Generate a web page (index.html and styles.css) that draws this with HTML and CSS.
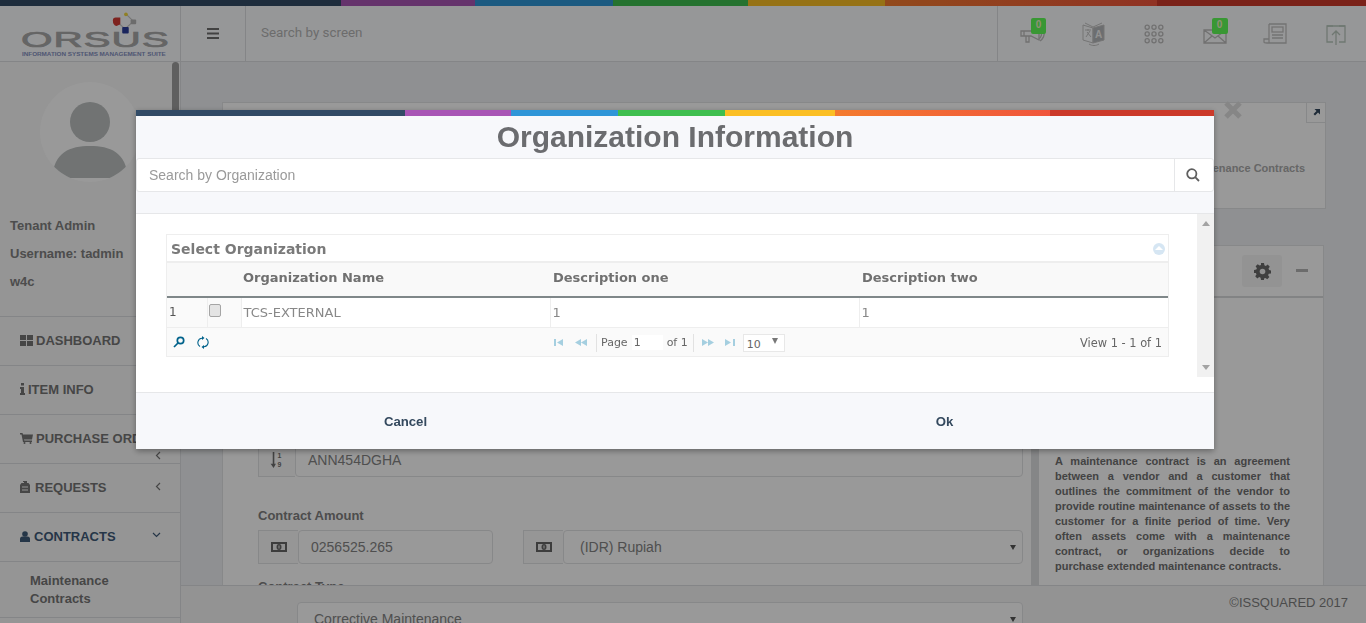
FILE: index.html
```html
<!DOCTYPE html>
<html lang="en">
<head>
    <meta charset="UTF-8">
    <title>Orsus - Maintenance Contracts</title>
    <link rel="stylesheet" href="styles.css">
</head>
<body>
    <div class="color-strip page-strip">
        <span class="c-navy"></span><span class="c-purple"></span><span class="c-blue"></span><span class="c-green"></span><span class="c-yellow"></span><span class="c-orange"></span><span class="c-red"></span>
    </div>

    <header class="topbar">
        <div class="logo">
            <svg class="logo-mark" viewBox="0 0 30 30">
                <path d="M6 10 L15 18 M15 18 L24 10 M24 10 L16 2" stroke="#c4c4c4" stroke-width="1.200" fill="none"/>
                <path d="M2 9 Q2 6 5 6 L10 6 L10 13 L6 15 Q2 14 2 9Z" fill="#d23b35"/>
                <rect x="12" y="16" width="7" height="7" rx="1" fill="#2c3f9c"/>
                <rect x="21" y="8" width="6" height="5" rx="1" fill="#b4b4b4"/>
                <circle cx="16" cy="2.500" r="2" fill="#f1d63c"/>
            </svg>
            <div class="logo-word">ORSUS</div>
            <div class="logo-sub">INFORMATION SYSTEMS MANAGEMENT SUITE</div>
        </div>
        <div class="menu-toggle">
            <svg width="12" height="11" viewBox="0 0 12 11"><path d="M0 0h12v2H0zM0 4.500h12v2H0zM0 9h12v2H0z" fill="#6f6f6f"/></svg>
        </div>
        <div class="screen-search">Search by screen</div>
        <div class="top-icons">
            <div class="top-icon">
                <svg width="26" height="22" viewBox="0 0 26 22" fill="none" stroke="#bcbcbc" stroke-width="1.300"><path d="M1 8h3v5H1zM4 8h7l8-4v13l-8-4H4zM6 13v6h3v-6"/><path d="M21 9c1 2 0 5-2 7M24 9c1 3-1 7-4 9"/></svg>
                <span class="badge">0</span>
            </div>
            <div class="top-icon">
                <svg width="24" height="26" viewBox="0 0 24 26" fill="none" stroke="#c2c2c2" stroke-width="1"><path d="M1 4l10 3v15L1 19z"/><path d="M11 7l11-3v15l-11 3z" fill="#b5b7bb"/><path d="M3 9h6M6 8v2M8 10l-4 6M5 11l4 5"/><path d="M7 23c3 2 7 2 10 0"/><path d="M3 2l8 4M20 2l-9 4"/><text x="13" y="17" font-family="Liberation Sans" font-size="10" font-weight="700" fill="#f2f2f2" stroke="none">A</text></svg>
            </div>
            <div class="top-icon">
                <svg width="20" height="20" viewBox="0 0 22 22" fill="none" stroke="#bcbcbc" stroke-width="1.400"><circle cx="3.500" cy="3.500" r="2.300"/><circle cx="11" cy="3.500" r="2.300"/><circle cx="18.500" cy="3.500" r="2.300"/><circle cx="3.500" cy="11" r="2.300"/><circle cx="11" cy="11" r="2.300"/><circle cx="18.500" cy="11" r="2.300"/><circle cx="3.500" cy="18.500" r="2.300"/><circle cx="11" cy="18.500" r="2.300"/><circle cx="18.500" cy="18.500" r="2.300"/></svg>
            </div>
            <div class="top-icon">
                <svg width="24" height="20" viewBox="0 0 24 20" fill="none" stroke="#bcbcbc" stroke-width="1.300"><path d="M1 6h22v13H1zM1 6l11 8 11-8M1 19l8-7M23 19l-8-7"/></svg>
                <span class="badge badge-mail">0</span>
            </div>
            <div class="top-icon">
                <svg width="24" height="24" viewBox="0 0 24 24" fill="none" stroke="#c0c0c0" stroke-width="1.300"><path d="M6 2h17v19H4M6 2v15H1v3q0 1 3 1t2-1v-3"/><rect x="9" y="5" width="11" height="5"/><path d="M9 13h11M9 16h11"/></svg>
            </div>
            <div class="top-icon">
                <svg width="20" height="22" viewBox="0 0 20 22" fill="none" stroke="#b9c7bd" stroke-width="1.300"><path d="M7 3H1v16h6M13 3h6v16h-6"/><path d="M1 3h18M10 22V8M6 12l4-4 4 4"/></svg>
            </div>
        </div>
    </header>

    <div class="layout">
        <aside class="sidebar">
            <div class="scroll-thumb"></div>
            <div class="avatar">
                <svg width="100" height="100" viewBox="0 0 100 100"><circle cx="50" cy="40" r="20" fill="#bcc0c0"/><path d="M12 96c2-26 18-32 38-32s36 6 38 32z" fill="#bcc0c0"/></svg>
            </div>
            <div class="user-info">
                <p>Tenant Admin</p>
                <p>Username: tadmin</p>
                <p>w4c</p>
            </div>
            <nav class="side-menu">
                <a class="menu-item">
                    <svg width="13" height="11" viewBox="0 0 13 11"><path d="M0 0h6v5H0zM7 0h6v5H7zM0 6h6v5H0zM7 6h6v5H7z" fill="#757575"/></svg>DASHBOARD
                </a>
                <a class="menu-item">
                    <svg width="5" height="12" viewBox="0 0 5 12"><path d="M1 0h3v2.500H1zM0 4h4v6h1v2H0v-2h1V6H0z" fill="#757575"/></svg>ITEM INFO
                </a>
                <a class="menu-item">
                    <svg width="13" height="11" viewBox="0 0 13 11"><path d="M0 0h2.500l.5 1.500h10L12 6.500H4l.3 1H12V9H3L1.500 1.500H0z" fill="#757575"/><circle cx="4.500" cy="10" r="1" fill="#757575"/><circle cx="10.500" cy="10" r="1" fill="#757575"/></svg>PURCHASE ORDERS
                    <svg class="chev chev-low" width="6" height="9" viewBox="0 0 6 9"><path d="M5 1L1.500 4.500 5 8" fill="none" stroke="#757575" stroke-width="1.200"/></svg>
                </a>
                <a class="menu-item">
                    <svg class="icon-req" width="10" height="12" viewBox="0 0 10 12"><path d="M3 0h4v2h1.500l1.500 2v8H0V4l1.500-2H3z" fill="#757575"/><path d="M2 6h6M3.500 2v-1" stroke="#f8f8f8"/><path d="M2 9h6" stroke="#f8f8f8"/></svg>REQUESTS
                    <svg class="chev" width="6" height="9" viewBox="0 0 6 9"><path d="M5 1L1.500 4.500 5 8" fill="none" stroke="#757575" stroke-width="1.200"/></svg>
                </a>
                <a class="menu-item menu-active">
                    <svg class="icon-user" width="10" height="11" viewBox="0 0 10 11"><circle cx="5" cy="3" r="2.800" fill="#3f5a78"/><path d="M0 11V8q0-2.500 2.500-2.500h5Q10 5.500 10 8v3z" fill="#3f5a78"/></svg>CONTRACTS
                    <svg class="chev chev-down" width="9" height="6" viewBox="0 0 9 6"><path d="M1 1l3.500 3.500L8 1" fill="none" stroke="#3f5a78" stroke-width="1.200"/></svg>
                </a>
                <a class="submenu-item">Maintenance Contracts</a>
            </nav>
        </aside>

        <main class="content">
            <section class="card top-card">
                <span class="expand-box">
                    <svg width="7" height="7" viewBox="0 0 7 7"><path d="M1.500 0H7v5.500L5 3.500 2 6.500.5 5 3.500 2z" fill="#34495e"/></svg>
                </span>
                <div class="top-card-title">Maintenance Contracts</div>
            </section>
            <svg class="close-x" width="18" height="18" viewBox="0 0 18 18"><path d="M2 2l14 14M16 2L2 16" stroke="#e0e0e0" stroke-width="5"/></svg>

            <section class="card form-card">
                <div class="card-head">
                    <span class="gear-btn">
                        <svg width="17" height="17" viewBox="0 0 17 17"><path d="M7 0h3l.4 2.300 1.400.6 1.900-1.300 2.100 2.100-1.300 1.900.6 1.400L17 7.400v3l-2.300.4-.6 1.400 1.300 1.900-2.100 2.100-1.900-1.300-1.400.6L10 17H7l-.4-2.300-1.400-.6-1.900 1.300-2.100-2.100 1.300-1.900-.6-1.400L0 10V7l2.300-.4.600-1.400L1.600 3.300 3.700 1.200l1.900 1.300 1.400-.6z" fill="#6a6a6a"/><circle cx="8.500" cy="8.500" r="2.800" fill="#eee"/></svg>
                    </span>
                    <span class="minus"></span>
                </div>
                <div class="card-body">
                    <div class="form-side">
                        <div class="field-row">
                            <span class="addon addon-sm"><svg width="14" height="16" viewBox="0 0 12 15"><path d="M2 0h1.500v11H5l-2.200 4L0 11h2z" fill="#6f6f6f"/><text x="6.500" y="6" font-family="Liberation Sans" font-size="6.500" font-weight="700" fill="#6f6f6f">1</text><text x="6.500" y="14" font-family="Liberation Sans" font-size="6.500" font-weight="700" fill="#6f6f6f">9</text></svg></span>
                            <span class="input input-wide">ANN454DGHA</span>
                        </div>
                        <label class="field-label">Contract Amount</label>
                        <div class="field-row">
                            <span class="addon"><svg width="16" height="10" viewBox="0 0 16 10"><path d="M0 0h16v10H0z" fill="#666"/><rect x="2" y="2" width="12" height="6" fill="#eee"/><ellipse cx="8" cy="5" rx="2.500" ry="3" fill="#666"/><rect x="7.500" y="3.500" width="1" height="3" fill="#eee"/></svg></span>
                            <span class="input input-amount">0256525.265</span>
                            <span class="addon addon-gap"><svg width="16" height="10" viewBox="0 0 16 10"><path d="M0 0h16v10H0z" fill="#666"/><rect x="2" y="2" width="12" height="6" fill="#eee"/><ellipse cx="8" cy="5" rx="2.500" ry="3" fill="#666"/><rect x="7.500" y="3.500" width="1" height="3" fill="#eee"/></svg></span>
                            <span class="input input-select">(IDR) Rupiah<i class="caret"></i></span>
                        </div>
                        <label class="field-label label-type">Contract Type</label>
                        <div class="type-row">
                            <span class="input input-type">Corrective Maintenance<i class="caret"></i></span>
                        </div>
                    </div>
                    <div class="info-side">
                        <p>A maintenance contract is an agreement between a vendor and a customer that outlines the commitment of the vendor to provide routine maintenance of assets to the customer for a finite period of time. Very often assets come with a maintenance contract, or organizations decide to purchase extended maintenance contracts.</p>
                    </div>
                </div>
            </section>

            <footer class="page-footer">&copy;ISSQUARED 2017</footer>
        </main>
    </div>

    <div class="backdrop"></div>

    <div class="modal">
        <div class="color-strip modal-strip">
            <span class="c-navy"></span><span class="c-purple"></span><span class="c-blue"></span><span class="c-green"></span><span class="c-yellow"></span><span class="c-orange"></span><span class="c-red"></span>
        </div>
        <h2 class="modal-title">Organization Information</h2>
        <div class="org-search">
            <div class="org-search-input">Search by Organization</div>
            <div class="org-search-btn">
                <svg width="14" height="14" viewBox="0 0 14 14" fill="none" stroke="#5f5f5f" stroke-width="1.800"><circle cx="5.800" cy="5.800" r="4.600"/><path d="M9.200 9.200L13 13"/></svg>
            </div>
        </div>
        <div class="modal-body">
            <div class="grid-scroll">
                <div class="grid">
                    <div class="grid-caption">
                        Select Organization
                        <span class="collapse-btn"><i></i></span>
                    </div>
                    <table class="grid-table">
                        <colgroup>
                            <col class="col-num"><col class="col-check"><col class="col-name"><col class="col-desc"><col class="col-desc">
                        </colgroup>
                        <thead>
                            <tr><th></th><th></th><th>Organization Name</th><th class="th-desc">Description one</th><th class="th-desc">Description two</th></tr>
                        </thead>
                        <tbody>
                            <tr>
                                <td class="cell-num">1</td>
                                <td class="cell-check"><input type="checkbox"></td>
                                <td>TCS-EXTERNAL</td>
                                <td>1</td>
                                <td>1</td>
                            </tr>
                        </tbody>
                    </table>
                    <div class="grid-pager">
                        <div class="pager-left">
                            <svg width="12" height="12" viewBox="0 0 12 12" fill="none" stroke="#00628b" stroke-width="1.700"><circle cx="7.500" cy="4.500" r="3.200"/><path d="M5 7L1 11"/></svg>
                            <svg width="12" height="13" viewBox="0 0 12 13" fill="none" stroke="#00628b" stroke-width="1.100"><path d="M3 10.500A4.500 4.500 0 0 1 5 2.200M9 2.500a4.500 4.500 0 0 1-2 8.300"/><path d="M5 0v4L7.500 2zM7 13V9l-2.500 2z" fill="#00628b" stroke="none"/></svg>
                        </div>
                        <div class="pager-center">
                            <svg class="pg-btn" width="10" height="7" viewBox="0 0 10 7"><path d="M0 0h2v7H0zM9 0v7L3 3.500z" fill="#a5cfe0"/></svg>
                            <svg class="pg-btn" width="12" height="7" viewBox="0 0 12 7"><path d="M6 0v7L0 3.500zM12 0v7L6 3.500z" fill="#a5cfe0"/></svg>
                            <span class="pg-sep"></span>
                            <span>Page</span>
                            <span class="pg-input">1</span>
                            <span>of 1</span>
                            <span class="pg-sep pg-sep-right"></span>
                            <svg class="pg-btn" width="12" height="7" viewBox="0 0 12 7"><path d="M0 0v7l6-3.500zM6 0v7l6-3.500z" fill="#a5cfe0"/></svg>
                            <svg class="pg-btn" width="10" height="7" viewBox="0 0 10 7"><path d="M0 0v7l6-3.500zM8 0h2v7H8z" fill="#a5cfe0"/></svg>
                            <span class="pg-size">10<i></i></span>
                        </div>
                        <div class="pager-right">View 1 - 1 of 1</div>
                    </div>
                </div>
            </div>
            <div class="modal-scrollbar">
                <i class="arrow-up"></i>
                <i class="arrow-down"></i>
            </div>
        </div>
        <div class="modal-footer">
            <button class="modal-btn">Cancel</button>
            <button class="modal-btn">Ok</button>
        </div>
    </div>
</body>
</html>
```

FILE: styles.css
```css
* {
    box-sizing: border-box;
}
html, body {
    height: 100%;
}
body {
    margin: 0;
    height: 623px;
    overflow: hidden;
    font-family: "Liberation Sans", Arial, sans-serif;
    background: #eef0f3;
    color: #7b7b7b;
}

/* colour strips */
.color-strip {
    display: flex;
    height: 6px;
}
.color-strip span {
    display: block;
}
.c-navy { background: #324b66; }
.c-purple { background: #a855b5; }
.c-blue { background: #2f96d8; }
.c-green { background: #3fbf4f; }
.c-yellow { background: #fbbf24; }
.c-orange { background: linear-gradient(to right, #f47b2e, #f0553c); }
.c-red { background: #cc3a2a; }

.page-strip .c-navy { width: 341px; }
.page-strip .c-purple { width: 134px; }
.page-strip .c-blue { width: 138px; }
.page-strip .c-green { width: 135px; }
.page-strip .c-yellow { width: 137px; }
.page-strip .c-orange { width: 272px; }
.page-strip .c-red { width: 209px; }

.modal-strip .c-navy { width: 269px; }
.modal-strip .c-purple { width: 106px; }
.modal-strip .c-blue { width: 107px; }
.modal-strip .c-green { width: 107px; }
.modal-strip .c-yellow { width: 110px; }
.modal-strip .c-orange { width: 215px; }
.modal-strip .c-red { width: 164px; }

/* top bar */
.topbar {
    display: flex;
    height: 56px;
    background: #fbfcfe;
    border-bottom: 1px solid #dcdee1;
}
.logo {
    position: relative;
    width: 181px;
    border-right: 1px solid #dcdee1;
}
.logo-mark {
    position: absolute;
    left: 111px;
    top: 6px;
    width: 28px;
    height: 28px;
}
.logo-word {
    position: absolute;
    left: 21px;
    top: 23px;
    font-size: 22px;
    line-height: 22px;
    letter-spacing: 0.5px;
    color: #a8a8a8;
    -webkit-text-stroke: 0.7px #a8a8a8;
    transform: scaleX(1.84);
    transform-origin: left center;
}
.logo-sub {
    position: absolute;
    left: 22px;
    top: 46px;
    font-size: 4.500px;
    line-height: 6px;
    font-weight: 700;
    white-space: nowrap;
    color: #8390c0;
    transform: scaleX(1.4);
    transform-origin: left center;
}
.menu-toggle {
    display: flex;
    align-items: center;
    justify-content: center;
    width: 65px;
    border-right: 1px solid #dcdee1;
}
.screen-search {
    flex: 1;
    padding: 19px 0 0 15px;
    font-family: Roboto, sans-serif;
    font-size: 13.400px;
    color: #b5b5b5;
}
.top-icons {
    display: flex;
    width: 369px;
    padding-left: 5px;
    border-left: 1px solid #dcdee1;
}
.top-icon {
    position: relative;
    display: flex;
    align-items: center;
    justify-content: center;
    width: 61.500px;
}
.badge {
    position: absolute;
    top: 12px;
    left: 28px;
    width: 15px;
    height: 16px;
    border-radius: 2px;
    background: #5ffc58;
    color: #f0f0c8;
    font-size: 10px;
    font-weight: 700;
    line-height: 14px;
    text-align: center;
}
.badge-mail {
    left: 27px;
    width: 16px;
}

/* sidebar */
.layout {
    display: flex;
    height: 561px;
}
.sidebar {
    position: relative;
    width: 181px;
    flex-shrink: 0;
    background: #f8f8f8;
    border-right: 1px solid #dcdee1;
}
.scroll-thumb {
    position: absolute;
    top: 0;
    right: 1px;
    width: 7px;
    height: 100px;
    border-radius: 4px;
    background: #9e9e9e;
}
.avatar {
    width: 100px;
    height: 100px;
    margin: 20px 0 0 40px;
    border-radius: 50%;
    overflow: hidden;
    background: #fff;
}
.user-info {
    height: 134px;
    padding: 36px 0 0 10px;
    font-size: 13px;
    font-weight: 700;
    color: #808080;
}
.user-info p {
    margin: 0 0 12px;
    line-height: 16px;
}
.menu-item {
    position: relative;
    display: flex;
    align-items: center;
    gap: 3px;
    height: 49px;
    padding: 0 0 2px 20px;
    border-top: 1px solid #dcdee1;
    font-size: 13px;
    font-weight: 700;
    white-space: nowrap;
    color: #757575;
}
.icon-req {
    margin-right: 2px;
}
.icon-user {
    margin-right: 1px;
}
.menu-active {
    color: #3f5a78;
}
.chev {
    position: absolute;
    left: 155px;
    top: 18px;
}
.chev-low {
    top: 36px;
}
.chev-down {
    left: 152px;
    top: 19px;
}
.submenu-item {
    display: block;
    height: 57px;
    padding: 10px 40px 0 30px;
    border-top: 1px solid #dcdee1;
    border-bottom: 1px solid #dcdee1;
    font-size: 13px;
    line-height: 18px;
    font-weight: 700;
    color: #757575;
}

/* main content behind the modal */
.content {
    position: relative;
    flex: 1;
    padding: 40px 40px 0 41px;
    overflow: hidden;
}
.close-x {
    position: absolute;
    left: 1043px;
    top: 39px;
}
.card {
    background: #fff;
    border: 1px solid #e2e3e5;
}
.top-card {
    position: relative;
    height: 107px;
}
.expand-box {
    position: absolute;
    top: -1px;
    right: -1px;
    display: flex;
    align-items: center;
    justify-content: center;
    width: 20px;
    height: 21px;
    border: 1px solid #e2e3e5;
}
.top-card-title {
    position: absolute;
    right: 20px;
    top: 59px;
    font-size: 11px;
    font-weight: 700;
    color: #aaa;
}
.form-card {
    width: 1102px;
    margin-top: 36px;
}
.card-head {
    display: flex;
    align-items: center;
    justify-content: flex-end;
    gap: 14px;
    height: 52px;
    padding-right: 15px;
    border-bottom: 2px solid #d9dadc;
}
.gear-btn {
    display: flex;
    align-items: center;
    justify-content: center;
    width: 40px;
    height: 32px;
    border-radius: 3px;
    background: #f5f5f5;
}
.minus {
    width: 12px;
    height: 3px;
    margin-bottom: 2px;
    background: #b5b5b5;
}
.card-body {
    display: flex;
    height: 300px;
}
.form-side {
    width: 808px;
    padding: 145px 0 0 35px;
    background: #fff;
}
.field-row {
    display: flex;
    height: 34px;
}
.addon {
    display: flex;
    align-items: center;
    justify-content: center;
    width: 40px;
    flex-shrink: 0;
    border: 1px solid #e2e3e5;
    border-right: 0;
    background: #fafafa;
}
.addon-sm {
    width: 37px;
}
.addon-gap {
    margin-left: 30px;
}
.input {
    position: relative;
    display: block;
    height: 34px;
    padding-left: 12px;
    border: 1px solid #e2e3e5;
    border-radius: 4px;
    background: #fff;
    font-size: 14px;
    line-height: 32px;
    color: #848484;
}
.input-wide {
    width: 728px;
}
.input-amount {
    width: 195px;
}
.input-select {
    width: 460px;
    padding-left: 16px;
}
.input-type {
    width: 726px;
    padding-left: 16px;
}
.caret {
    position: absolute;
    right: 6px;
    top: 14px;
    border-top: 5px solid #555;
    border-left: 3px solid transparent;
    border-right: 3px solid transparent;
}
.field-label {
    display: block;
    margin: 31px 0 7px;
    font-size: 13px;
    line-height: 15px;
    font-weight: 700;
    color: #808080;
}
.label-type {
    margin: 15px 0 8px;
}
.type-row {
    position: relative;
    z-index: 3;
    margin-left: 39px;
}
.info-side {
    width: 292px;
    padding: 156px 33px 0 16px;
    border-left: 8px solid #dedfe1;
    font-size: 11px;
    line-height: 15px;
    font-weight: 700;
    color: #707070;
    text-align: justify;
}
.info-side p {
    margin: 0;
}
.page-footer {
    position: absolute;
    left: 0;
    right: 0;
    bottom: 0;
    z-index: 2;
    height: 38px;
    padding: 8px 18px 0 0;
    border-top: 1px solid #dcdee1;
    background: #f5f5f5;
    font-size: 13px;
    line-height: 18px;
    text-align: right;
    color: #7e7e7e;
}

/* modal */
.backdrop {
    position: fixed;
    inset: 0;
    z-index: 10;
    background: rgba(0, 0, 0, 0.4);
}
.modal {
    position: fixed;
    left: 136px;
    top: 110px;
    z-index: 11;
    width: 1078px;
    height: 339px;
    background: #f7f8fb;
    box-shadow: 0 2px 6px rgba(0, 0, 0, 0.35);
}
.modal-title {
    margin: 0;
    height: 42px;
    font-size: 30px;
    line-height: 42px;
    font-weight: 700;
    text-align: center;
    color: #6b6c6f;
}
.org-search {
    display: flex;
    height: 34px;
    border: 1px solid #e6e7e9;
    background: #fff;
    border-radius: 3px;
}
.org-search-input {
    flex: 1;
    padding-left: 12px;
    font-size: 14px;
    line-height: 32px;
    color: #9a9a9a;
}
.org-search-btn {
    display: flex;
    align-items: center;
    justify-content: center;
    width: 39px;
    padding-right: 3px;
    border-left: 1px solid #e6e7e9;
}
.modal-body {
    display: flex;
    align-items: flex-start;
    height: 180px;
    margin-top: 21px;
    background: #fff;
    border-top: 1px solid #e6e7e9;
    border-bottom: 1px solid #e6e7e9;
}
.grid-scroll {
    width: 1061px;
    padding: 20px 0 0 30px;
}
.modal-scrollbar {
    position: relative;
    width: 17px;
    height: 163px;
    background: #f1f1f1;
}
.arrow-up, .arrow-down {
    position: absolute;
    left: 5px;
    border-left: 4px solid transparent;
    border-right: 4px solid transparent;
}
.arrow-up {
    top: 7px;
    border-bottom: 5px solid #a3a3a3;
}
.arrow-down {
    bottom: 7px;
    border-top: 5px solid #a3a3a3;
}
.modal-footer {
    display: flex;
    height: 56px;
    align-items: center;
}
.modal-btn {
    width: 539px;
    padding: 0;
    border: none;
    background: none;
    font-family: "Liberation Sans", Arial, sans-serif;
    font-size: 13.200px;
    font-weight: 700;
    color: #34495e;
}

/* grid */
.grid {
    width: 1003px;
    border: 1px solid #eee;
    font-family: "DejaVu Sans", Verdana, sans-serif;
    color: #777;
}
.grid-caption {
    position: relative;
    height: 28px;
    padding-left: 4px;
    border-bottom: 2px solid #eee;
    font-size: 14px;
    line-height: 29px;
    font-weight: 700;
    color: #7a7a7a;
}
.collapse-btn {
    position: absolute;
    right: 3px;
    top: 8px;
    display: block;
    width: 12px;
    height: 12px;
    border-radius: 50%;
    background: #d6e6f3;
}
.collapse-btn i {
    position: absolute;
    left: 2px;
    top: 3px;
    border-bottom: 4px solid #fff;
    border-left: 4px solid transparent;
    border-right: 4px solid transparent;
}
.grid-table {
    width: 100%;
    table-layout: fixed;
    border-collapse: collapse;
}
.col-num { width: 40px; }
.col-check { width: 34px; }
.col-name { width: 309px; }
.col-desc { width: 309px; }
.grid-table th {
    height: 34px;
    padding: 0 2px 5px;
    background: #f9f9f9;
    border-bottom: 2px solid #7f8789;
    font-size: 13px;
    font-weight: 700;
    text-align: left;
    color: #707070;
}
.grid-table .th-desc {
    padding-left: 3px;
}
.grid-table td {
    height: 30px;
    padding: 0 2px;
    border-left: 1px solid #eee;
    border-bottom: 1px solid #eee;
    font-size: 13px;
    color: #888;
}
.grid-table td:first-child {
    border-left: none;
}
.cell-num {
    padding-left: 2px;
    font-size: 12px !important;
    color: #555 !important;
    background: #fafafa;
}
.cell-check {
    background: #fafafa;
}
.cell-check input {
    display: block;
    width: 12px;
    height: 13px;
    margin: -4px 0 0 -1px;
    appearance: none;
    border: 1px solid #a5a5a5;
    border-radius: 2px;
    background: #e4e4e4;
}
.grid-pager {
    position: relative;
    display: flex;
    align-items: center;
    height: 28px;
    padding-top: 1px;
    background: #fafafa;
    font-size: 11px;
    color: #666;
}
.pager-left {
    display: flex;
    gap: 12px;
    width: 60px;
    padding-left: 6px;
}
.pager-center {
    position: absolute;
    left: 387px;
    top: 5px;
    display: flex;
    align-items: center;
    height: 20px;
}
.pg-btn {
    margin-right: 11px;
}
.pg-sep {
    width: 1px;
    height: 18px;
    margin: 0 4px 0 -2px;
    background: #e2e2e2;
}
.pg-sep-right {
    margin: 0 8px 0 5px;
}
.pg-input {
    width: 31px;
    height: 15px;
    margin: 0 4px;
    padding-left: 2px;
    background: #fff;
    line-height: 15px;
}
.pg-size {
    position: relative;
    width: 42px;
    height: 18px;
    margin-left: -3px;
    padding: 3px 0 0 3px;
    border: 1px solid #e8e8e8;
    background: #fff;
}
.pg-size i {
    position: absolute;
    right: 6px;
    top: 3px;
    border-top: 6px solid #777;
    border-left: 3px solid transparent;
    border-right: 3px solid transparent;
}
.pager-right {
    margin-left: auto;
    padding: 1px 6px 0 0;
    font-size: 11.400px;
}
```
